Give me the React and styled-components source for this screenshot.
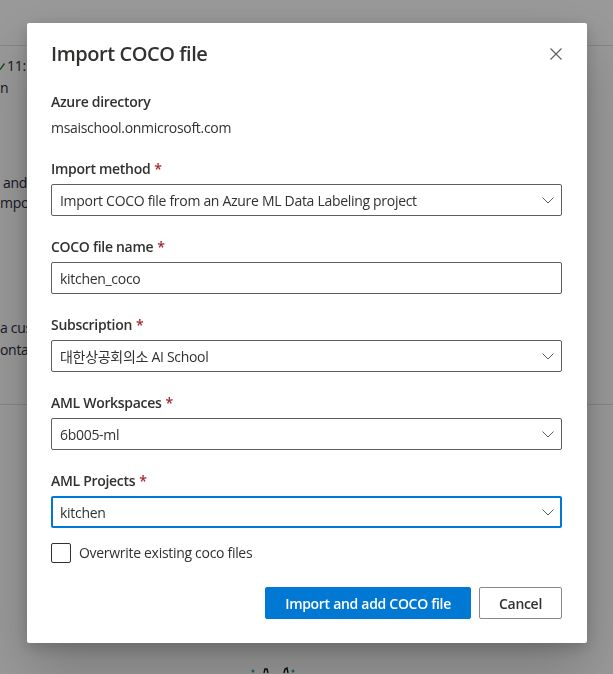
import React from 'react';
import styled, { createGlobalStyle } from 'styled-components';

const GlobalStyle = createGlobalStyle`
  html, body {
    margin: 0;
    padding: 0;
  }
  body {
    font-family: "Open Sans", "Noto Sans CJK KR", sans-serif;
    letter-spacing: -0.3px;
    background: #ffffff;
    overflow: hidden;
  }
  * {
    box-sizing: border-box;
  }
`;

// page behind the modal
const Page = styled.div`
  height: 100vh;
  background: #ffffff;
  color: #1f2a44;
  font-size: 14px;
`;

const TopBar = styled.div`
  height: 46px;
  border-bottom: 1px solid #e1dfdd;
`;

const BgBlock = styled.div`
  margin-top: ${(p) => p.top}px;
  line-height: ${(p) => p.lh}px;
  white-space: nowrap;
`;

const BgLine = styled.div`
  display: flex;
  align-items: center;
  gap: 2px;
  padding-left: ${(p) => p.indent || 0}px;
`;

const BgDivider = styled.div`
  margin-top: 43px;
  border-top: 1px solid #e1dfdd;
`;

const BgArt = styled.div`
  margin: 262px 0 0 250px;
  line-height: 0;
`;

const Overlay = styled.div`
  position: fixed;
  inset: 0;
  background: rgba(0, 0, 0, 0.4);
`;

const Dialog = styled.div`
  position: fixed;
  top: 23px;
  left: 27px;
  width: 560px;
  background: #ffffff;
  border-radius: 2px;
  box-shadow: 0 25.6px 57.6px 0 rgba(0, 0, 0, 0.22),
    0 4.8px 14.4px 0 rgba(0, 0, 0, 0.18);
  color: #323130;
`;

const Header = styled.div`
  display: flex;
  align-items: center;
  justify-content: space-between;
  padding: 15px 15px 17px 24px;
`;

const Title = styled.h2`
  margin: 0;
  font-size: 20px;
  font-weight: 600;
  line-height: 28px;
  letter-spacing: -0.45px;
  color: #323130;
`;

const CloseButton = styled.button`
  width: 32px;
  height: 32px;
  display: flex;
  align-items: center;
  justify-content: center;
  border: none;
  background: transparent;
  padding: 0;
  cursor: pointer;
`;

const Body = styled.div`
  padding: 0 25px 24px 24px;
`;

const Fields = styled.div`
  display: flex;
  flex-direction: column;
  gap: 16px;
`;

const Field = styled.div`
  display: flex;
  flex-direction: column;
`;

const Label = styled.label`
  display: block;
  padding: 5px 0;
  font-size: 14px;
  font-weight: 600;
  line-height: 20px;
  color: #323130;
`;

const Required = styled.span`
  color: #a4262c;
  padding-left: 4px;
`;

const StaticValue = styled.div`
  padding-top: 1px;
  font-size: 14px;
  line-height: 20px;
  color: #323130;
`;

const Box = styled.div`
  height: 32px;
  display: flex;
  align-items: center;
  justify-content: space-between;
  border: ${(p) => (p.focused ? '2px solid #0078d4' : '1px solid #605e5c')};
  border-radius: 2px;
  padding: 0 ${(p) => (p.focused ? 6 : 7)}px 0 ${(p) => (p.focused ? 7 : 8)}px;
  font-size: 14px;
  color: #323130;
  background: #ffffff;
`;

const BoxText = styled.span`
  white-space: nowrap;
  overflow: hidden;
`;

const CheckRow = styled.label`
  display: flex;
  align-items: center;
  gap: 8px;
  margin-top: -1px;
  font-size: 14px;
  line-height: 20px;
  color: #323130;
`;

const CheckBox = styled.span`
  width: 20px;
  height: 20px;
  border: 1px solid #323130;
  border-radius: 2px;
`;

const Footer = styled.div`
  display: flex;
  justify-content: flex-end;
  gap: 8px;
  margin-top: 24px;
`;

const Button = styled.button`
  height: 32px;
  min-width: 80px;
  padding: 0 19px;
  border-radius: 2px;
  font-family: inherit;
  letter-spacing: -0.3px;
  font-size: 14px;
  font-weight: 600;
  border: 1px solid ${(p) => (p.primary ? '#0078d4' : '#8a8886')};
  background: ${(p) => (p.primary ? '#0078d4' : '#ffffff')};
  color: ${(p) => (p.primary ? '#ffffff' : '#323130')};
  cursor: pointer;
`;

const Chevron = () => (
  <svg width="12" height="12" viewBox="0 0 12 12">
    <path d="M0.5 3.5 L6 9 L11.5 3.5" fill="none" stroke="#605e5c" strokeWidth="1" />
  </svg>
);

const CloseIcon = () => (
  <svg width="12" height="12" viewBox="0 0 12 12">
    <path d="M0.5 0.5 L11.5 11.5 M11.5 0.5 L0.5 11.5" stroke="#605e5c" strokeWidth="1.1" />
  </svg>
);

// only the tail of the check mark peeks out at the page edge
const TickIcon = () => (
  <svg width="5" height="9" viewBox="0 0 5 9">
    <path d="M0 7.5 L4.5 1.5" fill="none" stroke="#107c10" strokeWidth="1.3" />
  </svg>
);

const ArtFragment = () => (
  <svg width="46" height="6" viewBox="0 0 46 6">
    <circle cx="3" cy="4" r="1.5" fill="#3a9fb5" />
    <path d="M14 6 L15 2 L17 2 L18 6" fill="none" stroke="#111" strokeWidth="1.4" />
    <path d="M34 6 L35 2 L37 1 L38 6" fill="none" stroke="#111" strokeWidth="1.4" />
    <circle cx="43" cy="4" r="1.5" fill="#3a9fb5" />
  </svg>
);

const selects = [
  { label: 'Import method', value: 'Import COCO file from an Azure ML Data Labeling project', dropdown: true },
  { label: 'COCO file name', value: 'kitchen_coco' },
  { label: 'Subscription', value: '대한상공회의소 AI School', dropdown: true },
  { label: 'AML Workspaces', value: '6b005-ml', dropdown: true },
  { label: 'AML Projects', value: 'kitchen', dropdown: true, focused: true },
];

export default function App() {
  return (
    <>
      <GlobalStyle />
      <Page>
        <TopBar />
        <BgBlock top={9} lh={22}>
          <BgLine>
            <TickIcon />
            11:14 AM
          </BgLine>
          <BgLine>n</BgLine>
        </BgBlock>
        <BgBlock top={74} lh={20}>
          <BgLine indent={3}>and tags into the project</BgLine>
          <BgLine>mport your labeled images</BgLine>
        </BgBlock>
        <BgBlock top={104} lh={22}>
          <BgLine>a custom vision project</BgLine>
          <BgLine>ontains the annotations</BgLine>
        </BgBlock>
        <BgDivider />
        <BgArt>
          <ArtFragment />
        </BgArt>
      </Page>
      <Overlay />
      <Dialog role="dialog">
        <Header>
          <Title>Import COCO file</Title>
          <CloseButton aria-label="Close">
            <CloseIcon />
          </CloseButton>
        </Header>
        <Body>
          <Fields>
            <Field>
              <Label>Azure directory</Label>
              <StaticValue>msaischool.onmicrosoft.com</StaticValue>
            </Field>
            {selects.map((s) => (
              <Field key={s.label}>
                <Label>
                  {s.label}
                  <Required>*</Required>
                </Label>
                <Box focused={s.focused}>
                  <BoxText>{s.value}</BoxText>
                  {s.dropdown && <Chevron />}
                </Box>
              </Field>
            ))}
            <CheckRow>
              <CheckBox />
              Overwrite existing coco files
            </CheckRow>
          </Fields>
          <Footer>
            <Button primary>Import and add COCO file</Button>
            <Button>Cancel</Button>
          </Footer>
        </Body>
      </Dialog>
    </>
  );
}
